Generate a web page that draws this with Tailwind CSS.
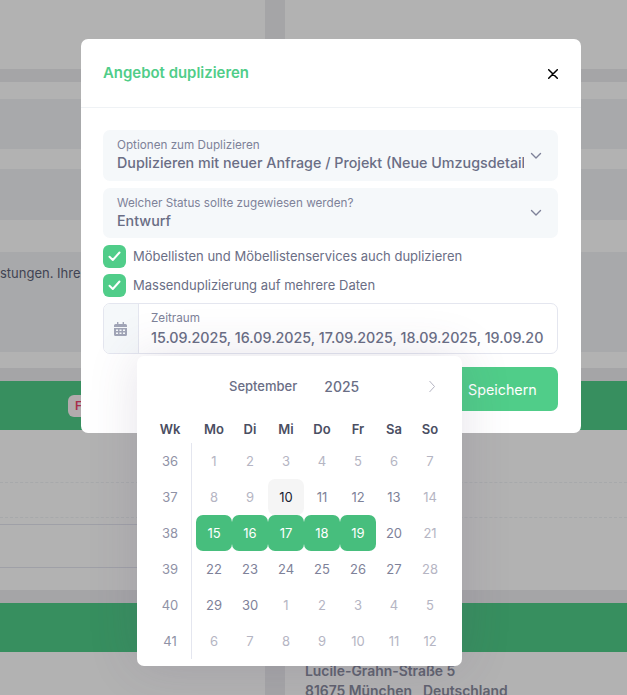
<!DOCTYPE html>
<html lang="de">
<head>
  <meta charset="UTF-8">
  <meta name="viewport" content="width=device-width, initial-scale=1.0">
  <title>Angebot duplizieren</title>
  <script src="https://cdn.jsdelivr.net/npm/@tailwindcss/browser@4"></script>
</head>
<body class="relative h-[695px] w-[627px] overflow-hidden bg-[#ecedef] font-['Inter',sans-serif] antialiased">

<!-- Seite hinter dem Dialog -->
<div class="grid grid-cols-[265px_342px] gap-x-5 w-[627px]">
  <div class="flex flex-col">
    <div class="h-[69px] bg-white"></div>
    <div class="mt-[13px] h-[286px] flex flex-col bg-white">
      <div class="mt-[17px] h-[50px] bg-[#f1f3f5]"></div>
      <div class="mt-5 h-[51px] bg-[#f1f3f5]"></div>
      <div class="mt-8 h-[100px] bg-[#f1f3f5] pt-[12px] text-[13px] leading-[18px] text-[#5e6278] whitespace-nowrap">stungen. Ihre Zufriedenheit</div>
    </div>
    <div class="mt-[13px] h-[209px] flex flex-col bg-white">
      <div class="h-[49px] bg-[#50cd89] flex items-center pl-[68px]">
        <span class="h-[22px] rounded-[6px] bg-[#fff5f8] px-[7px] text-[12px] leading-[22px] font-semibold text-[#f1416c]">Fehlt</span>
      </div>
      <div class="h-[53px] border-b border-dashed border-[#eff2f5]"></div>
      <div class="h-[35px] border-b border-dashed border-[#eff2f5]"></div>
      <div class="h-[7px] border-b border-[#e4e6ef]"></div>
      <div class="h-[43px] border-b border-[#e4e6ef]"></div>
    </div>
    <div class="mt-[13px] h-[49px] bg-[#50cd89]"></div>
    <div class="h-[43px] bg-white"></div>
  </div>
  <div class="flex flex-col">
    <div class="h-[69px] bg-white"></div>
    <div class="mt-[13px] h-[286px] flex flex-col bg-white">
      <div class="mt-[17px] h-[50px] bg-[#f1f3f5]"></div>
      <div class="mt-5 h-[51px] bg-[#f1f3f5]"></div>
      <div class="mt-8 h-[100px] bg-[#f1f3f5]"></div>
    </div>
    <div class="mt-[13px] h-[209px] flex flex-col bg-white">
      <div class="h-[49px] bg-[#50cd89]"></div>
      <div class="h-[53px] border-b border-dashed border-[#eff2f5]"></div>
      <div class="h-[35px] border-b border-dashed border-[#eff2f5]"></div>
    </div>
    <div class="mt-[13px] h-[49px] bg-[#50cd89]"></div>
    <div class="h-[43px] bg-white pl-5 pt-[9px] text-[13.9px] leading-[20px] font-semibold text-[#8a8d9f] whitespace-nowrap">
      <p>Lucile-Grahn-Straße 5</p>
      <p>81675 München , Deutschland</p>
    </div>
  </div>
</div>

<!-- Overlay -->
<div class="absolute inset-0 bg-black/30"></div>

<!-- Dialog -->
<div class="absolute left-[81px] top-[39px] w-[500px] h-[394px] rounded-[7px] bg-white">
  <div class="h-[69px] border-b border-[#eff2f5] flex items-center justify-between pl-[22px] pr-[23px]">
    <h2 class="text-[14.95px] font-semibold text-[#50cd89]">Angebot duplizieren</h2>
    <svg class="mt-[1px]" width="10" height="10" viewBox="0 0 10 10" fill="none" stroke="#000" stroke-width="1.5" stroke-linecap="round"><path d="M.7.7l8.6 8.6M9.3.7L.7 9.3"/></svg>
  </div>

  <div class="pl-[22px] pr-[23px] pt-[22px] flex flex-col">
    <div class="relative h-[51px] rounded-[7px] bg-[#f5f8fa] pl-[14px] pt-[8px]">
      <p class="text-[11.7px] leading-[15px] text-[#7e8299]">Optionen zum Duplizieren</p>
      <p class="w-[407px] overflow-hidden whitespace-nowrap text-[14.3px] leading-[20px] font-medium text-[#6a6e85]">Duplizieren mit neuer Anfrage / Projekt (Neue Umzugsdetails)</p>
      <svg class="absolute right-[16px] top-[22px]" width="12" height="8" viewBox="0 0 12 8" fill="none" stroke="#7e8299" stroke-width="1.4" stroke-linecap="round" stroke-linejoin="round"><path d="M1.5 1.5L6 6l4.5-4.5"/></svg>
    </div>
    <div class="relative mt-[7px] h-[50px] rounded-[7px] bg-[#f5f8fa] pl-[14px] pt-[8px]">
      <p class="text-[11.7px] leading-[15px] text-[#7e8299]">Welcher Status sollte zugewiesen werden?</p>
      <p class="text-[14.3px] leading-[20px] font-medium text-[#6a6e85]">Entwurf</p>
      <svg class="absolute right-[16px] top-[21px]" width="12" height="8" viewBox="0 0 12 8" fill="none" stroke="#7e8299" stroke-width="1.4" stroke-linecap="round" stroke-linejoin="round"><path d="M1.5 1.5L6 6l4.5-4.5"/></svg>
    </div>

    <label class="mt-[7px] h-[23px] flex items-center gap-[7px] text-[13px] text-[#6a6e85]">
      <span class="h-[23px] w-[23px] rounded-[6px] bg-[#50cd89] flex items-center justify-center">
        <svg width="13" height="11" viewBox="0 0 13 11" fill="none" stroke="#fff" stroke-width="2" stroke-linecap="round" stroke-linejoin="round"><path d="M1.5 5.8L4.8 9l6.7-7.5"/></svg>
      </span>
      Möbellisten und Möbellistenservices auch duplizieren
    </label>
    <label class="mt-[6px] h-[23px] flex items-center gap-[7px] text-[13px] text-[#6a6e85]">
      <span class="h-[23px] w-[23px] rounded-[6px] bg-[#50cd89] flex items-center justify-center">
        <svg width="13" height="11" viewBox="0 0 13 11" fill="none" stroke="#fff" stroke-width="2" stroke-linecap="round" stroke-linejoin="round"><path d="M1.5 5.8L4.8 9l6.7-7.5"/></svg>
      </span>
      Massenduplizierung auf mehrere Daten
    </label>

    <!-- Zeitraum mit Kalender -->
    <div class="relative mt-[6px]">
      <div class="h-[51px] rounded-[7px] border border-[#e4e6ef] flex overflow-hidden">
        <div class="w-[35px] shrink-0 border-r border-[#e4e6ef] bg-[#f5f8fa] pr-[2px] flex items-center justify-center">
          <svg width="13" height="14" viewBox="0 0 13 14" fill="#a1a5b7"><path d="M3 0h1.4v2H8.6V0H10v2h1.5A1.5 1.5 0 0 1 13 3.5V5H0V3.5A1.500 1.500 0 0 1 1.500 2H3z"/><path fill-rule="evenodd" d="M0 6h13v6.500a1.500 1.500 0 0 1-1.500 1.500h-10A1.500 1.500 0 0 1 0 12.500zm2 1.500v1.500h2V7.500zm3.500 0v1.500h2V7.500zm3.500 0v1.500h2V7.500zM2 10.500V12h2v-1.500zm3.500 0V12h2v-1.500zm3.500 0V12h2v-1.500z"/></svg>
        </div>
        <div class="pl-[12px] pt-[7px] w-[405px]">
          <p class="text-[11.7px] leading-[15px] text-[#7e8299]">Zeitraum</p>
          <p class="mt-[2px] w-[393px] overflow-hidden whitespace-nowrap text-[14.3px] leading-[20px] font-medium text-[#6a6e85]">15.09.2025, 16.09.2025, 17.09.2025, 18.09.2025, 19.09.2025</p>
        </div>
      </div>

      <div class="absolute left-[34px] top-[53px] z-10 w-[325px] h-[310px] rounded-[7px] bg-white shadow-[0_0_50px_0_rgba(82,63,105,0.15)]">
        <div class="h-[59px] pt-[2px] flex items-center pl-[92px] text-[#6a6e85] font-medium">
          <span class="text-[13px]">September</span>
          <span class="ml-[27px] text-[14px]">2025</span>
          <svg class="ml-[69px]" width="8" height="13" viewBox="0 0 8 13" fill="none" stroke="#b5b5c3" stroke-width="1"><path d="M1.500 1l5 5.500-5 5.500"/></svg>
        </div>
        <div class="pl-[15px] flex">
          <div class="w-[40px]">
            <div class="h-[28px] pt-[2px] pr-1 flex items-center justify-center text-[13px] font-semibold text-[#4a4e62]">Wk</div>
            <div id="weeks" class="border-r border-[#e4e6ef] pr-[3px]"></div>
          </div>
          <div class="ml-1 w-[252px]">
            <div class="h-[28px] pt-[2px] grid grid-cols-7 text-[13px] font-semibold text-[#4a4e62] text-center items-center">
              <span>Mo</span><span>Di</span><span>Mi</span><span>Do</span><span>Fr</span><span>Sa</span><span>So</span>
            </div>
            <div id="days" class="grid grid-cols-7"></div>
          </div>
        </div>
      </div>
    </div>

    <div class="mt-[13px] self-end h-[44px] w-[150px] rounded-[7px] bg-[#50cd89] pl-[60px] pt-px text-[14.3px] leading-[44px] text-white">Speichern</div>
  </div>
</div>

<script>
  const cell = 'h-9 pt-px flex items-center justify-center rounded-[7px] text-[13px] ';
  const muted = 'text-[#b5b5c3]';
  const normal = 'text-[#7e8299]';
  const today = 'bg-[#f5f5f5] text-[#181c32]';
  const picked = 'bg-[#47be7d] text-white';

  document.getElementById('weeks').innerHTML = [36, 37, 38, 39, 40, 41]
    .map(w => `<div class="h-9 pt-px flex items-center justify-center text-[13px] text-[#8f92a6]">${w}</div>`)
    .join('');

  const days = [
    [1, muted], [2, muted], [3, muted], [4, muted], [5, muted], [6, muted], [7, muted],
    [8, muted], [9, muted], [10, today], [11, normal], [12, normal], [13, normal], [14, muted],
    [15, picked], [16, picked], [17, picked], [18, picked], [19, picked], [20, normal], [21, muted],
    [22, normal], [23, normal], [24, normal], [25, normal], [26, normal], [27, normal], [28, muted],
    [29, normal], [30, normal], [1, muted], [2, muted], [3, muted], [4, muted], [5, muted],
    [6, muted], [7, muted], [8, muted], [9, muted], [10, muted], [11, muted], [12, muted],
  ];
  document.getElementById('days').innerHTML = days
    .map(([d, tone]) => `<div class="${cell}${tone}">${d}</div>`)
    .join('');
</script>

</body>
</html>
